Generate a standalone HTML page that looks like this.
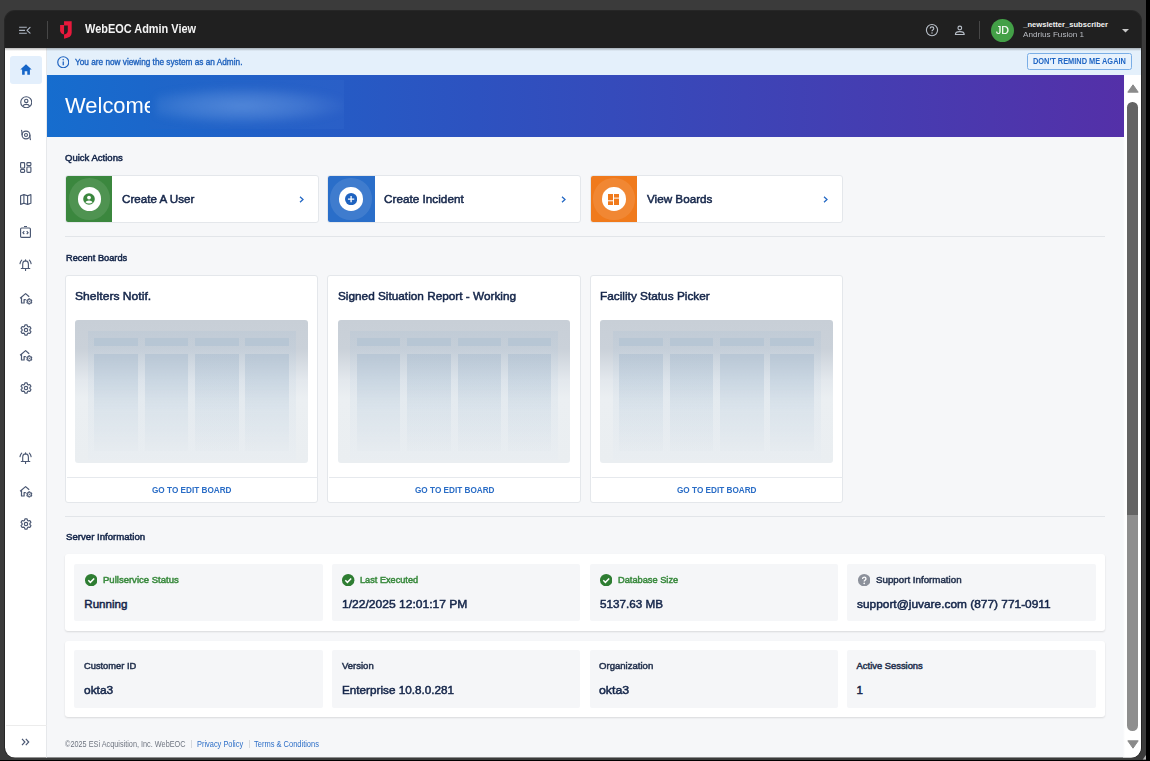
<!DOCTYPE html>
<html><head><meta charset="utf-8">
<style>
*{box-sizing:border-box;margin:0;padding:0}
html,body{width:1150px;height:761px;overflow:hidden}
body{background:#000;font-family:"Liberation Sans",sans-serif;position:relative}
#frame{position:absolute;left:0;top:0;width:1146px;height:759.5px;background:#3b3b3b}
#win{position:absolute;left:0;top:0;width:1150px;height:761px;clip-path:inset(11px 9px 3.4px 5px round 10px)}
#win>div{position:absolute}
#hdr{left:0;top:0;width:1150px;height:48px;background:#202020}
#side{left:0;top:48px;width:47px;height:720px;background:#fff;border-right:1px solid #e6e8eb}
#info{left:47px;top:48px;width:1100px;height:27px;background:#e4f0fb}
#sb{left:1123px;top:75px;width:21px;height:700px;background:linear-gradient(90deg,#f6f7f9,#fff 2px)}
.t{position:absolute;white-space:nowrap;line-height:1;transform-origin:0 0}
.b{font-weight:700}
.navy{color:#1b2a4a}
.card{position:absolute;background:#fff;border:1px solid #e4e7eb;border-radius:3px}
</style></head><body>
<div id="frame"></div>
<div style="position:absolute;left:4.2px;top:10.3px;width:1137.6px;height:748.2px;border-radius:11px;background:#262626"></div>
<svg style="position:absolute;left:1140px;top:752px" width="6" height="8" viewBox="0 0 6 8"><path d="M6 3V7.4H2.8Z" fill="#b0b0b0"/></svg>
<div id="win">
  <div style="left:47px;top:48px;width:1100px;height:720px;background:#f6f7f9"></div>
  <div id="hdr"></div>
  <div id="side"></div>
  <div id="info"></div>
  <div id="sb"></div>
  <div style="left:0;top:48px;width:1150px;height:3px;background:linear-gradient(180deg,rgba(0,0,0,.28),rgba(0,0,0,0))"></div>

  <!-- header content -->
  <svg style="position:absolute;left:15px;top:22px" width="20" height="16" viewBox="0 0 20 16"><g stroke="#aeb6c2" stroke-width="1.15" fill="none"><path d="M4.1 5.26H11.8M4.1 8.3H10M4.1 11.25H11.8"/><path d="M15.05 5.3L12 8.3L15.05 11.1" stroke-linecap="round" stroke-linejoin="round"/></g></svg>
  <div style="left:46.5px;top:21px;width:1px;height:18px;background:#474747"></div>
  <svg style="position:absolute;left:55px;top:17px" width="22" height="26" viewBox="0 0 22 26"><path d="M5.1 8H9.05V17.5Q5.1 16.8 5.1 13.2Z" fill="#e8193c"/><path d="M9.05 4.3H16.7V15.8Q16.7 20.6 9.05 21.7V17.5Q12.8 16.9 12.8 13.4V8.5H9.05Z" fill="#e8193c"/></svg>
  <svg style="position:absolute;left:925px;top:23px" width="14" height="14" viewBox="0 0 14 14"><circle cx="7" cy="7.1" r="5.6" stroke="#b8bfc8" stroke-width="1.15" fill="none"/><path d="M5.2 5.6Q5.2 3.9 7 3.9Q8.8 3.9 8.8 5.5Q8.8 6.4 7.8 6.9Q7 7.4 7 8.3" stroke="#b8bfc8" stroke-width="1.15" fill="none"/><circle cx="7" cy="10.1" r=".75" fill="#b8bfc8"/></svg>
  <svg style="position:absolute;left:954px;top:25px" width="12" height="11" viewBox="0 0 12 11"><circle cx="5.8" cy="3" r="1.85" stroke="#b8bfc8" stroke-width="1.15" fill="none"/><path d="M1.4 9.5Q1.4 6.6 5.8 6.6Q10.2 6.6 10.2 9.5Z" stroke="#b8bfc8" stroke-width="1.15" fill="none" stroke-linejoin="round"/></svg>
  <div style="left:978.5px;top:21px;width:1px;height:18px;background:#474747"></div>
  <div style="left:990.5px;top:18.5px;width:23.5px;height:23.5px;border-radius:50%;background:#43a047"></div>
  <svg style="position:absolute;left:1121.5px;top:28.5px" width="7" height="4" viewBox="0 0 7 4"><path d="M0 0H7L3.5 3.6Z" fill="#c9c9c9"/></svg>

  <!-- sidebar -->
  <div style="left:9.5px;top:56px;width:32.5px;height:27.7px;background:#e3effc;border-radius:3px"></div>
  <svg style="position:absolute;left:19.5px;top:63.5px" width="12" height="11" viewBox="0 0 12 11"><path d="M6 0.3L11.7 5.4H9.9V10.7H7.3V7.3H4.7V10.7H2.1V5.4H0.3Z" fill="#1565c8"/></svg>
  <svg style="position:absolute;left:19.5px;top:95.8px" width="12.5" height="12.5" viewBox="0 0 12.5 12.5"><g stroke="#4b5873" stroke-width="1.15" fill="none"><circle cx="6.25" cy="6.25" r="5.5"/><circle cx="6.25" cy="4.9" r="1.7"/><path d="M3 10.2Q3.6 8.3 6.25 8.3Q8.9 8.3 9.5 10.2"/></g></svg>
  <svg style="position:absolute;left:19.8px;top:128.5px" width="12" height="12" viewBox="0 0 12 12"><g stroke="#4b5873" stroke-width="1.15" fill="none"><circle cx="6" cy="6" r="1.5"/><circle cx="6" cy="6" r="3.9"/><path d="M2.1 6.3Q2.1 2.8 1.5 0.8M9.9 5.7Q9.9 9.2 10.5 11.2"/></g></svg>
  <svg style="position:absolute;left:20px;top:162px" width="11.5" height="11" viewBox="0 0 11.5 11"><g stroke="#4b5873" stroke-width="1.15" fill="none"><rect x=".6" y=".6" width="4" height="5.5" rx=".8"/><rect x="6.9" y=".6" width="4" height="3" rx=".8"/><rect x=".6" y="7.5" width="4" height="2.9" rx=".8"/><rect x="6.9" y="5" width="4" height="5.4" rx=".8"/></g></svg>
  <svg style="position:absolute;left:20px;top:194.3px" width="11.5" height="11" viewBox="0 0 11.5 11"><g stroke="#4b5873" stroke-width="1.15" fill="none" stroke-linejoin="round"><path d="M.6 1.8L3.9.6L7.6 1.8L10.9.6V9.2L7.6 10.4L3.9 9.2L.6 10.4Z"/><path d="M3.9.6V9.2M7.6 1.8V10.4"/></g></svg>
  <svg style="position:absolute;left:20px;top:225.8px" width="11" height="12" viewBox="0 0 11 12"><g stroke="#4b5873" stroke-width="1.15" fill="none"><rect x=".6" y="2" width="9.8" height="9.4" rx="1"/><path d="M4 .5H7M4.3 5.2L2.9 6.7L4.3 8.2M6.7 5.2L8.1 6.7L6.7 8.2"/></g></svg>
<svg style="position:absolute;left:15px;top:252.0px" width="22" height="22" viewBox="0 0 22 22"><g stroke="#4b5873" stroke-width="1.15" fill="none" stroke-linecap="round"><path d="M7.7 16.3V12.4Q7.7 9 10.55 8.9Q13.4 9 13.4 12.4V16.3M6.3 16.5H14.8M10.55 17.2V18.4M10.55 7.7V8.5M5 11.7Q5.3 9.5 6.7 8.1M16.1 11.7Q15.8 9.5 14.4 8.1"/></g></svg>
<svg style="position:absolute;left:19px;top:291.9px" width="14" height="13" viewBox="0 0 14 13"><g stroke="#4b5873" stroke-width="1.2" fill="none" stroke-linejoin="round"><path d="M1.1 6.2L6.6 1.6L10.2 4.8M2.5 5.3V11H5.1V7.6H6.8"/><path d="M9.58 7.69 L9.76 6.86 L10.84 6.86 L11.02 7.69 L11.42 7.93 L12.23 7.66 L12.77 8.60 L12.14 9.17 L12.14 9.63 L12.77 10.20 L12.23 11.14 L11.42 10.87 L11.02 11.11 L10.84 11.94 L9.76 11.94 L9.58 11.11 L9.18 10.87 L8.37 11.14 L7.83 10.20 L8.46 9.63 L8.46 9.17 L7.83 8.60 L8.37 7.66 L9.18 7.93Z" stroke-width="1.05"/><circle cx="10.3" cy="9.4" r=".6" fill="#4b5873" stroke="none"/></g></svg>
<svg style="position:absolute;left:19.6px;top:324.2px" width="12" height="12" viewBox="0 0 12 12"><g stroke="#4b5873" stroke-width="1.15" fill="none" stroke-linejoin="round"><path d="M4.49 2.40 L4.92 0.91 L7.08 0.91 L7.51 2.40 L8.36 2.89 L9.86 2.52 L10.95 4.39 L9.87 5.51 L9.87 6.49 L10.95 7.61 L9.86 9.48 L8.36 9.11 L7.51 9.60 L7.08 11.09 L4.92 11.09 L4.49 9.60 L3.64 9.11 L2.14 9.48 L1.05 7.61 L2.13 6.49 L2.13 5.51 L1.05 4.39 L2.14 2.52 L3.64 2.89Z"/><circle cx="6" cy="6" r="1.7"/></g></svg>
<svg style="position:absolute;left:19px;top:349.4px" width="14" height="13" viewBox="0 0 14 13"><g stroke="#4b5873" stroke-width="1.2" fill="none" stroke-linejoin="round"><path d="M1.1 6.2L6.6 1.6L10.2 4.8M2.5 5.3V11H5.1V7.6H6.8"/><path d="M9.58 7.69 L9.76 6.86 L10.84 6.86 L11.02 7.69 L11.42 7.93 L12.23 7.66 L12.77 8.60 L12.14 9.17 L12.14 9.63 L12.77 10.20 L12.23 11.14 L11.42 10.87 L11.02 11.11 L10.84 11.94 L9.76 11.94 L9.58 11.11 L9.18 10.87 L8.37 11.14 L7.83 10.20 L8.46 9.63 L8.46 9.17 L7.83 8.60 L8.37 7.66 L9.18 7.93Z" stroke-width="1.05"/><circle cx="10.3" cy="9.4" r=".6" fill="#4b5873" stroke="none"/></g></svg>
<svg style="position:absolute;left:19.6px;top:381.7px" width="12" height="12" viewBox="0 0 12 12"><g stroke="#4b5873" stroke-width="1.15" fill="none" stroke-linejoin="round"><path d="M4.49 2.40 L4.92 0.91 L7.08 0.91 L7.51 2.40 L8.36 2.89 L9.86 2.52 L10.95 4.39 L9.87 5.51 L9.87 6.49 L10.95 7.61 L9.86 9.48 L8.36 9.11 L7.51 9.60 L7.08 11.09 L4.92 11.09 L4.49 9.60 L3.64 9.11 L2.14 9.48 L1.05 7.61 L2.13 6.49 L2.13 5.51 L1.05 4.39 L2.14 2.52 L3.64 2.89Z"/><circle cx="6" cy="6" r="1.7"/></g></svg>
<svg style="position:absolute;left:15px;top:445.2px" width="22" height="22" viewBox="0 0 22 22"><g stroke="#4b5873" stroke-width="1.15" fill="none" stroke-linecap="round"><path d="M7.7 16.3V12.4Q7.7 9 10.55 8.9Q13.4 9 13.4 12.4V16.3M6.3 16.5H14.8M10.55 17.2V18.4M10.55 7.7V8.5M5 11.7Q5.3 9.5 6.7 8.1M16.1 11.7Q15.8 9.5 14.4 8.1"/></g></svg>
<svg style="position:absolute;left:19px;top:484.6px" width="14" height="13" viewBox="0 0 14 13"><g stroke="#4b5873" stroke-width="1.2" fill="none" stroke-linejoin="round"><path d="M1.1 6.2L6.6 1.6L10.2 4.8M2.5 5.3V11H5.1V7.6H6.8"/><path d="M9.58 7.69 L9.76 6.86 L10.84 6.86 L11.02 7.69 L11.42 7.93 L12.23 7.66 L12.77 8.60 L12.14 9.17 L12.14 9.63 L12.77 10.20 L12.23 11.14 L11.42 10.87 L11.02 11.11 L10.84 11.94 L9.76 11.94 L9.58 11.11 L9.18 10.87 L8.37 11.14 L7.83 10.20 L8.46 9.63 L8.46 9.17 L7.83 8.60 L8.37 7.66 L9.18 7.93Z" stroke-width="1.05"/><circle cx="10.3" cy="9.4" r=".6" fill="#4b5873" stroke="none"/></g></svg>
<svg style="position:absolute;left:19.6px;top:518.0px" width="12" height="12" viewBox="0 0 12 12"><g stroke="#4b5873" stroke-width="1.15" fill="none" stroke-linejoin="round"><path d="M4.49 2.40 L4.92 0.91 L7.08 0.91 L7.51 2.40 L8.36 2.89 L9.86 2.52 L10.95 4.39 L9.87 5.51 L9.87 6.49 L10.95 7.61 L9.86 9.48 L8.36 9.11 L7.51 9.60 L7.08 11.09 L4.92 11.09 L4.49 9.60 L3.64 9.11 L2.14 9.48 L1.05 7.61 L2.13 6.49 L2.13 5.51 L1.05 4.39 L2.14 2.52 L3.64 2.89Z"/><circle cx="6" cy="6" r="1.7"/></g></svg>
  <div style="left:6px;top:724.5px;width:41px;height:1px;background:#ececec"></div>
  <svg style="position:absolute;left:21px;top:737.5px" width="9" height="8" viewBox="0 0 9 8"><g stroke="#4b5873" stroke-width="1.2" fill="none"><path d="M1 .8L3.9 4L1 7.2M4.8 .8L7.7 4L4.8 7.2"/></g></svg>
  <!-- info bar -->
  <svg style="position:absolute;left:56.5px;top:55.5px" width="12.5" height="12.5" viewBox="0 0 12.5 12.5"><circle cx="6.25" cy="6.25" r="5.5" stroke="#1f63c0" stroke-width="1.2" fill="none"/><path d="M6.25 5.4V9.3" stroke="#1f63c0" stroke-width="1.3"/><circle cx="6.25" cy="3.7" r=".8" fill="#1f63c0"/></svg>
  <div style="left:1027.3px;top:53.1px;width:104.3px;height:17.3px;border:1px solid #7aaee6;border-radius:2.5px;background:#e8f2fc"></div>
  <!-- banner -->
  <div style="left:47px;top:75px;width:1077px;height:62px;background:linear-gradient(90deg,#166dce 0%,#2d52c0 40%,#5430a8 100%)"></div>
  <div class="t" style="left:64.6px;top:95.3px;font-size:22.4px;color:#fff;transform:scaleX(.98)">Welcome</div>
  <div style="left:150px;top:80.4px;width:193.7px;height:48.2px;background:linear-gradient(90deg,#1e66c9,#2a5fc7);overflow:hidden">
    <div style="position:absolute;left:6px;top:5px;width:190px;height:40px;background:radial-gradient(ellipse 58% 50% at 45% 52%,rgba(120,165,230,.55),rgba(120,165,230,.3) 55%,rgba(120,165,230,0) 100%);filter:blur(3px)"></div>
  </div>

  <!-- quick actions -->
  <div class="card" style="left:65px;top:175px;width:253.6px;height:47.6px"></div>
  <div class="card" style="left:327px;top:175px;width:253.6px;height:47.6px"></div>
  <div class="card" style="left:590px;top:175px;width:253.2px;height:47.6px"></div>
  <div style="left:66px;top:176px;width:46px;height:46px;background:#3b873e;border-radius:2px 0 0 2px"></div>
  <div style="left:328px;top:176px;width:46.5px;height:46px;background:#2a6ec9;border-radius:2px 0 0 2px"></div>
  <div style="left:590.6px;top:176px;width:46.3px;height:46px;background:#f07a1c;border-radius:2px 0 0 2px"></div>

  <!-- quick action icons -->
  <div style="left:68.5px;top:178px;width:41.5px;height:41.5px;border-radius:50%;background:rgba(255,255,255,.1)"></div>
  <div style="left:77.5px;top:187.2px;width:23.6px;height:23.6px;border-radius:50%;background:#fff"></div>
  <svg style="position:absolute;left:83.3px;top:193px" width="12" height="12" viewBox="0 0 12 12"><circle cx="6" cy="6" r="5.8" fill="#3b873e"/><circle cx="6" cy="4.6" r="1.9" fill="#fff"/><path d="M2.4 9.2Q3.2 7.6 6 7.6Q8.8 7.6 9.6 9.2Q8.2 10.6 6 10.6Q3.8 10.6 2.4 9.2Z" fill="#fff"/></svg>
  <div style="left:330.3px;top:178px;width:41.5px;height:41.5px;border-radius:50%;background:rgba(255,255,255,.1)"></div>
  <div style="left:339.3px;top:187.2px;width:23.6px;height:23.6px;border-radius:50%;background:#fff"></div>
  <svg style="position:absolute;left:345px;top:193px" width="12.2" height="12.2" viewBox="0 0 12 12"><circle cx="6" cy="6" r="6" fill="#1f63c0"/><path d="M6 2.9V9.1M2.9 6H9.1" stroke="#fff" stroke-width="1.3"/></svg>
  <div style="left:593.3px;top:178px;width:41.5px;height:41.5px;border-radius:50%;background:rgba(255,255,255,.1)"></div>
  <div style="left:602.3px;top:187.2px;width:23.6px;height:23.6px;border-radius:50%;background:#fff"></div>
  <svg style="position:absolute;left:608px;top:193.7px" width="11" height="11.2" viewBox="0 0 11 11.2"><g fill="#f07a1c"><rect x="0" y="0" width="5" height="6.3"/><rect x="6" y="0" width="5" height="3.6"/><rect x="0" y="7.3" width="5" height="3.9"/><rect x="6" y="4.6" width="5" height="6.6"/></g></svg>
  <svg style="position:absolute;left:298.5px;top:196px" width="6" height="7" viewBox="0 0 6 7"><path d="M1 .7L4 3.5L1 6.3" stroke="#2468c4" stroke-width="1.3" fill="none"/></svg>
  <svg style="position:absolute;left:560.5px;top:196px" width="6" height="7" viewBox="0 0 6 7"><path d="M1 .7L4 3.5L1 6.3" stroke="#2468c4" stroke-width="1.3" fill="none"/></svg>
  <svg style="position:absolute;left:822.8px;top:196px" width="6" height="7" viewBox="0 0 6 7"><path d="M1 .7L4 3.5L1 6.3" stroke="#2468c4" stroke-width="1.3" fill="none"/></svg>
  <div style="left:65px;top:236px;width:1040px;height:1px;background:#e2e5e9"></div>

  <!-- recent boards -->
  <div class="card" style="left:65px;top:274.5px;width:253.4px;height:228px"></div>
  <div class="card" style="left:327px;top:274.5px;width:253.6px;height:228px"></div>
  <div class="card" style="left:590px;top:274.5px;width:253.2px;height:228px"></div>

  <!-- previews -->
  <div style="left:75px;top:319.5px;width:232.8px;height:143.8px;border-radius:3px;background:linear-gradient(180deg,#c8cfd7 0%,#cad1d9 20%,#e3e8ed 42%,#ebeff2 55%,#eaeef1 100%)"></div>
  <div style="left:87.8px;top:331.3px;width:208px;height:128.4px;background:linear-gradient(180deg,rgba(170,190,210,.25) 0%,rgba(200,215,228,.25) 40%,rgba(230,236,242,.3) 100%)"></div>
  <div style="left:94.2px;top:337.7px;width:43.6px;height:8.6px;background:#b4c4d3;opacity:.8"></div>
  <div style="left:94.2px;top:353.5px;width:43.6px;height:97px;background:linear-gradient(180deg,rgba(165,185,205,.45) 0%,rgba(175,195,213,.38) 30%,rgba(200,215,228,.3) 60%,rgba(225,232,238,.15) 100%);filter:blur(.6px)"></div>
  <div style="left:144.8px;top:337.7px;width:43.6px;height:8.6px;background:#b4c4d3;opacity:.8"></div>
  <div style="left:144.8px;top:353.5px;width:43.6px;height:97px;background:linear-gradient(180deg,rgba(165,185,205,.45) 0%,rgba(175,195,213,.38) 30%,rgba(200,215,228,.3) 60%,rgba(225,232,238,.15) 100%);filter:blur(.6px)"></div>
  <div style="left:195.2px;top:337.7px;width:43.6px;height:8.6px;background:#b4c4d3;opacity:.8"></div>
  <div style="left:195.2px;top:353.5px;width:43.6px;height:97px;background:linear-gradient(180deg,rgba(165,185,205,.45) 0%,rgba(175,195,213,.38) 30%,rgba(200,215,228,.3) 60%,rgba(225,232,238,.15) 100%);filter:blur(.6px)"></div>
  <div style="left:245.4px;top:337.7px;width:43.6px;height:8.6px;background:#b4c4d3;opacity:.8"></div>
  <div style="left:245.4px;top:353.5px;width:43.6px;height:97px;background:linear-gradient(180deg,rgba(165,185,205,.45) 0%,rgba(175,195,213,.38) 30%,rgba(200,215,228,.3) 60%,rgba(225,232,238,.15) 100%);filter:blur(.6px)"></div>
  <div style="left:337.5px;top:319.5px;width:232.8px;height:143.8px;border-radius:3px;background:linear-gradient(180deg,#c8cfd7 0%,#cad1d9 20%,#e3e8ed 42%,#ebeff2 55%,#eaeef1 100%)"></div>
  <div style="left:350.3px;top:331.3px;width:208px;height:128.4px;background:linear-gradient(180deg,rgba(170,190,210,.25) 0%,rgba(200,215,228,.25) 40%,rgba(230,236,242,.3) 100%)"></div>
  <div style="left:356.7px;top:337.7px;width:43.6px;height:8.6px;background:#b4c4d3;opacity:.8"></div>
  <div style="left:356.7px;top:353.5px;width:43.6px;height:97px;background:linear-gradient(180deg,rgba(165,185,205,.45) 0%,rgba(175,195,213,.38) 30%,rgba(200,215,228,.3) 60%,rgba(225,232,238,.15) 100%);filter:blur(.6px)"></div>
  <div style="left:407.3px;top:337.7px;width:43.6px;height:8.6px;background:#b4c4d3;opacity:.8"></div>
  <div style="left:407.3px;top:353.5px;width:43.6px;height:97px;background:linear-gradient(180deg,rgba(165,185,205,.45) 0%,rgba(175,195,213,.38) 30%,rgba(200,215,228,.3) 60%,rgba(225,232,238,.15) 100%);filter:blur(.6px)"></div>
  <div style="left:457.7px;top:337.7px;width:43.6px;height:8.6px;background:#b4c4d3;opacity:.8"></div>
  <div style="left:457.7px;top:353.5px;width:43.6px;height:97px;background:linear-gradient(180deg,rgba(165,185,205,.45) 0%,rgba(175,195,213,.38) 30%,rgba(200,215,228,.3) 60%,rgba(225,232,238,.15) 100%);filter:blur(.6px)"></div>
  <div style="left:507.9px;top:337.7px;width:43.6px;height:8.6px;background:#b4c4d3;opacity:.8"></div>
  <div style="left:507.9px;top:353.5px;width:43.6px;height:97px;background:linear-gradient(180deg,rgba(165,185,205,.45) 0%,rgba(175,195,213,.38) 30%,rgba(200,215,228,.3) 60%,rgba(225,232,238,.15) 100%);filter:blur(.6px)"></div>
  <div style="left:600px;top:319.5px;width:232.8px;height:143.8px;border-radius:3px;background:linear-gradient(180deg,#c8cfd7 0%,#cad1d9 20%,#e3e8ed 42%,#ebeff2 55%,#eaeef1 100%)"></div>
  <div style="left:612.8px;top:331.3px;width:208px;height:128.4px;background:linear-gradient(180deg,rgba(170,190,210,.25) 0%,rgba(200,215,228,.25) 40%,rgba(230,236,242,.3) 100%)"></div>
  <div style="left:619.2px;top:337.7px;width:43.6px;height:8.6px;background:#b4c4d3;opacity:.8"></div>
  <div style="left:619.2px;top:353.5px;width:43.6px;height:97px;background:linear-gradient(180deg,rgba(165,185,205,.45) 0%,rgba(175,195,213,.38) 30%,rgba(200,215,228,.3) 60%,rgba(225,232,238,.15) 100%);filter:blur(.6px)"></div>
  <div style="left:669.8px;top:337.7px;width:43.6px;height:8.6px;background:#b4c4d3;opacity:.8"></div>
  <div style="left:669.8px;top:353.5px;width:43.6px;height:97px;background:linear-gradient(180deg,rgba(165,185,205,.45) 0%,rgba(175,195,213,.38) 30%,rgba(200,215,228,.3) 60%,rgba(225,232,238,.15) 100%);filter:blur(.6px)"></div>
  <div style="left:720.2px;top:337.7px;width:43.6px;height:8.6px;background:#b4c4d3;opacity:.8"></div>
  <div style="left:720.2px;top:353.5px;width:43.6px;height:97px;background:linear-gradient(180deg,rgba(165,185,205,.45) 0%,rgba(175,195,213,.38) 30%,rgba(200,215,228,.3) 60%,rgba(225,232,238,.15) 100%);filter:blur(.6px)"></div>
  <div style="left:770.4px;top:337.7px;width:43.6px;height:8.6px;background:#b4c4d3;opacity:.8"></div>
  <div style="left:770.4px;top:353.5px;width:43.6px;height:97px;background:linear-gradient(180deg,rgba(165,185,205,.45) 0%,rgba(175,195,213,.38) 30%,rgba(200,215,228,.3) 60%,rgba(225,232,238,.15) 100%);filter:blur(.6px)"></div>
  <div style="left:66.5px;top:476.5px;width:251px;height:1px;background:#e6e9ed"></div>
  <div style="left:328.5px;top:476.5px;width:251px;height:1px;background:#e6e9ed"></div>
  <div style="left:591.5px;top:476.5px;width:251px;height:1px;background:#e6e9ed"></div>
  <div style="left:65px;top:516px;width:1040px;height:1px;background:#e2e5e9"></div>

  <!-- server info -->
  <div class="card" style="left:65px;top:554px;width:1040px;height:77px;border:0;box-shadow:0 1px 2px rgba(0,0,0,.12)"></div>
  <div class="card" style="left:65px;top:641px;width:1040px;height:76px;border:0;box-shadow:0 1px 2px rgba(0,0,0,.12)"></div>

  <!-- server tiles -->
  <div style="left:74.2px;top:563.7px;width:248.4px;height:57.8px;background:#f5f6f8;border-radius:2px"></div>
  <div style="left:74.2px;top:650px;width:248.4px;height:57.5px;background:#f5f6f8;border-radius:2px"></div>
  <svg style="position:absolute;left:84.5px;top:573.6px" width="12.4" height="12.4" viewBox="0 0 12 12"><circle cx="6" cy="6" r="6" fill="#2e7d32"/><path d="M3.2 6.1L5.2 8.1L8.9 4.3" stroke="#fff" stroke-width="1.4" fill="none"/></svg>
  <div style="left:332.1px;top:563.7px;width:248.4px;height:57.8px;background:#f5f6f8;border-radius:2px"></div>
  <div style="left:332.1px;top:650px;width:248.4px;height:57.5px;background:#f5f6f8;border-radius:2px"></div>
  <svg style="position:absolute;left:342.40000000000003px;top:573.6px" width="12.4" height="12.4" viewBox="0 0 12 12"><circle cx="6" cy="6" r="6" fill="#2e7d32"/><path d="M3.2 6.1L5.2 8.1L8.9 4.3" stroke="#fff" stroke-width="1.4" fill="none"/></svg>
  <div style="left:589.8px;top:563.7px;width:248.4px;height:57.8px;background:#f5f6f8;border-radius:2px"></div>
  <div style="left:589.8px;top:650px;width:248.4px;height:57.5px;background:#f5f6f8;border-radius:2px"></div>
  <svg style="position:absolute;left:600.0999999999999px;top:573.6px" width="12.4" height="12.4" viewBox="0 0 12 12"><circle cx="6" cy="6" r="6" fill="#2e7d32"/><path d="M3.2 6.1L5.2 8.1L8.9 4.3" stroke="#fff" stroke-width="1.4" fill="none"/></svg>
  <div style="left:847.4px;top:563.7px;width:248.4px;height:57.8px;background:#f5f6f8;border-radius:2px"></div>
  <div style="left:847.4px;top:650px;width:248.4px;height:57.5px;background:#f5f6f8;border-radius:2px"></div>
  <svg style="position:absolute;left:857.6999999999999px;top:573.6px" width="12.4" height="12.4" viewBox="0 0 12 12"><circle cx="6" cy="6" r="6" fill="#8c919b"/><path d="M4.4 4.8Q4.4 3 6 3Q7.7 3 7.7 4.6Q7.7 5.5 6.8 6Q6 6.5 6 7.3" stroke="#fff" stroke-width="1.3" fill="none"/><circle cx="6" cy="9.1" r=".8" fill="#fff"/></svg>

  <!-- footer -->
  <div style="left:191px;top:740px;width:1px;height:8px;background:#d5d8dc"></div>
  <div style="left:248.5px;top:740px;width:1px;height:8px;background:#d5d8dc"></div>

  <div class="t" style="left:84.70px;top:22.78px;font-size:12.6px;color:#f4f4f4;font-weight:700;transform:scaleX(0.869);">WebEOC Admin View</div>
  <div class="t" style="left:75.00px;top:57.60px;font-size:8.5px;color:#1f62bd;-webkit-text-stroke:0.35px #1f62bd;transform:scaleX(0.970);">You are now viewing the system as an Admin.</div>
  <div class="t" style="left:1033.20px;top:56.84px;font-size:8.4px;color:#1f65c4;font-weight:700;transform:scaleX(0.885);">DON'T REMIND ME AGAIN</div>
  <div class="t" style="left:1023.20px;top:20.51px;font-size:7.6px;color:#f2f2f2;font-weight:700;">_newsletter_subscriber</div>
  <div class="t" style="left:1023.20px;top:31.05px;font-size:7.5px;color:#b9bcc2;transform:scaleX(1.086);">Andrius Fusion 1</div>
  <div class="t" style="left:996.00px;top:24.51px;font-size:11.8px;color:#ffffff;-webkit-text-stroke:0.2px #ffffff;transform:scaleX(0.893);">JD</div>
  <div class="t" style="left:65.36px;top:153.46px;font-size:9.45px;color:#15264a;-webkit-text-stroke:0.5px #15264a;transform:scaleX(1.009);">Quick Actions</div>
  <div class="t" style="left:122.00px;top:193.52px;font-size:11.55px;color:#15264a;-webkit-text-stroke:0.5px #15264a;transform:scaleX(1.006);">Create A User</div>
  <div class="t" style="left:383.90px;top:193.52px;font-size:11.55px;color:#15264a;-webkit-text-stroke:0.5px #15264a;transform:scaleX(1.018);">Create Incident</div>
  <div class="t" style="left:646.50px;top:193.52px;font-size:11.55px;color:#15264a;-webkit-text-stroke:0.5px #15264a;transform:scaleX(1.012);">View Boards</div>
  <div class="t" style="left:65.70px;top:252.84px;font-size:9.4px;color:#15264a;-webkit-text-stroke:0.5px #15264a;transform:scaleX(0.987);">Recent Boards</div>
  <div class="t" style="left:75.30px;top:290.48px;font-size:11.6px;color:#15264a;-webkit-text-stroke:0.5px #15264a;transform:scaleX(1.046);">Shelters Notif.</div>
  <div class="t" style="left:337.60px;top:290.48px;font-size:11.6px;color:#15264a;-webkit-text-stroke:0.5px #15264a;transform:scaleX(1.017);">Signed Situation Report - Working</div>
  <div class="t" style="left:600.10px;top:290.48px;font-size:11.6px;color:#15264a;-webkit-text-stroke:0.5px #15264a;transform:scaleX(1.020);">Facility Status Picker</div>
  <div class="t" style="left:152.00px;top:485.51px;font-size:9.2px;color:#2a6dc6;font-weight:700;transform:scaleX(0.892);">GO TO EDIT BOARD</div>
  <div class="t" style="left:414.50px;top:485.51px;font-size:9.2px;color:#2a6dc6;font-weight:700;transform:scaleX(0.892);">GO TO EDIT BOARD</div>
  <div class="t" style="left:677.00px;top:485.51px;font-size:9.2px;color:#2a6dc6;font-weight:700;transform:scaleX(0.892);">GO TO EDIT BOARD</div>
  <div class="t" style="left:65.50px;top:532.44px;font-size:9.4px;color:#15264a;-webkit-text-stroke:0.5px #15264a;transform:scaleX(1.026);">Server Information</div>
  <div class="t" style="left:102.80px;top:574.84px;font-size:9.4px;color:#3a8a3e;-webkit-text-stroke:0.5px #3a8a3e;transform:scaleX(1.016);">Pullservice Status</div>
  <div class="t" style="left:360.30px;top:574.84px;font-size:9.4px;color:#3a8a3e;-webkit-text-stroke:0.5px #3a8a3e;transform:scaleX(0.978);">Last Executed</div>
  <div class="t" style="left:617.70px;top:574.84px;font-size:9.4px;color:#3a8a3e;-webkit-text-stroke:0.5px #3a8a3e;transform:scaleX(0.987);">Database Size</div>
  <div class="t" style="left:875.60px;top:574.84px;font-size:9.4px;color:#25334f;-webkit-text-stroke:0.5px #25334f;transform:scaleX(1.039);">Support Information</div>
  <div class="t" style="left:84.30px;top:598.18px;font-size:11.6px;color:#15264a;-webkit-text-stroke:0.5px #15264a;">Running</div>
  <div class="t" style="left:342.30px;top:598.08px;font-size:11.6px;color:#15264a;-webkit-text-stroke:0.5px #15264a;transform:scaleX(1.040);">1/22/2025 12:01:17 PM</div>
  <div class="t" style="left:599.65px;top:598.18px;font-size:11.6px;color:#15264a;-webkit-text-stroke:0.5px #15264a;transform:scaleX(1.007);">5137.63 MB</div>
  <div class="t" style="left:856.90px;top:598.18px;font-size:11.6px;color:#15264a;-webkit-text-stroke:0.5px #15264a;transform:scaleX(1.026);">support@juvare.com (877) 771-0911</div>
  <div class="t" style="left:83.80px;top:660.94px;font-size:9.4px;color:#25334f;-webkit-text-stroke:0.5px #25334f;transform:scaleX(0.992);">Customer ID</div>
  <div class="t" style="left:341.90px;top:660.84px;font-size:9.4px;color:#25334f;-webkit-text-stroke:0.5px #25334f;transform:scaleX(1.013);">Version</div>
  <div class="t" style="left:599.00px;top:660.84px;font-size:9.4px;color:#25334f;-webkit-text-stroke:0.5px #25334f;transform:scaleX(1.021);">Organization</div>
  <div class="t" style="left:856.60px;top:660.84px;font-size:9.4px;color:#25334f;-webkit-text-stroke:0.5px #25334f;">Active Sessions</div>
  <div class="t" style="left:83.80px;top:684.48px;font-size:11.6px;color:#15264a;-webkit-text-stroke:0.5px #15264a;transform:scaleX(1.028);">okta3</div>
  <div class="t" style="left:341.90px;top:684.18px;font-size:11.6px;color:#15264a;-webkit-text-stroke:0.5px #15264a;transform:scaleX(1.011);">Enterprise 10.8.0.281</div>
  <div class="t" style="left:599.00px;top:684.48px;font-size:11.6px;color:#15264a;-webkit-text-stroke:0.5px #15264a;transform:scaleX(1.066);">okta3</div>
  <div class="t" style="left:856.60px;top:684.48px;font-size:11.6px;color:#15264a;-webkit-text-stroke:0.5px #15264a;">1</div>
  <div class="t" style="left:65.20px;top:740.56px;font-size:8.2px;color:#6f7580;transform:scaleX(0.892);">©2025 ESi Acquisition, Inc. WebEOC</div>
  <div class="t" style="left:196.90px;top:740.56px;font-size:8.2px;color:#2e6fc7;transform:scaleX(0.906);">Privacy Policy</div>
  <div class="t" style="left:254.40px;top:740.56px;font-size:8.2px;color:#2e6fc7;transform:scaleX(0.915);">Terms &amp; Conditions</div>
  <!-- scrollbar -->
  <svg style="position:absolute;left:1126.5px;top:84px" width="12" height="9" viewBox="0 0 12 9"><path d="M6 .8L11.2 8.2H.8Z" fill="#8a8a8a" stroke="#8a8a8a" stroke-width="1" stroke-linejoin="round"/></svg>
  <div style="left:1127.1px;top:101.5px;width:10.5px;height:629.3px;border-radius:5.25px;background:linear-gradient(180deg,#646464 0,#646464 413.3px,#8e8e8e 413.3px)"></div>
  <svg style="position:absolute;left:1126.5px;top:740px" width="12" height="9" viewBox="0 0 12 9"><path d="M.8 .8H11.2L6 8.2Z" fill="#8a8a8a" stroke="#8a8a8a" stroke-width="1" stroke-linejoin="round"/></svg>
</div>
</body></html>
